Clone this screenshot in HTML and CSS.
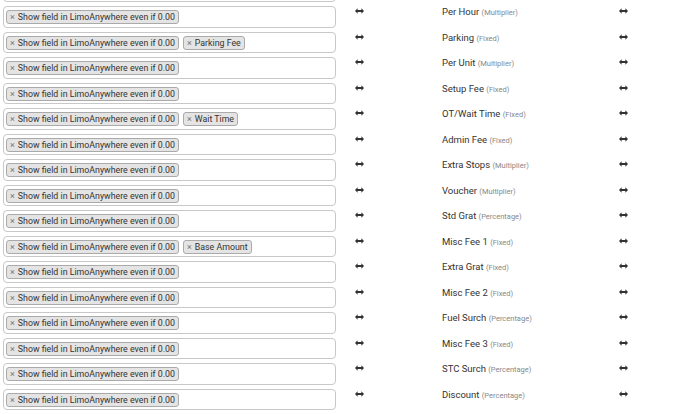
FILE: index.html
```html
<!DOCTYPE html>
<html lang="en">
<head>
  <meta charset="UTF-8">
  <meta name="viewport" content="width=device-width, initial-scale=1.0">
  <title>Field Mapping</title>
  <link rel="stylesheet" href="styles.css">
</head>
<body>
  <div class="mapping">
    <!-- previous row, scrolled mostly out of view -->
    <div class="row">
      <div class="select"></div>
    </div>
    <div id="mapping"></div>
  </div>

  <script>
    const rows = [
      ['Per Hour', 'Multiplier', []],
      ['Parking', 'Fixed', ['Parking Fee']],
      ['Per Unit', 'Multiplier', []],
      ['Setup Fee', 'Fixed', []],
      ['OT/Wait Time', 'Fixed', ['Wait Time']],
      ['Admin Fee', 'Fixed', []],
      ['Extra Stops', 'Multiplier', []],
      ['Voucher', 'Multiplier', []],
      ['Std Grat', 'Percentage', []],
      ['Misc Fee 1', 'Fixed', ['Base Amount']],
      ['Extra Grat', 'Fixed', []],
      ['Misc Fee 2', 'Fixed', []],
      ['Fuel Surch', 'Percentage', []],
      ['Misc Fee 3', 'Fixed', []],
      ['STC Surch', 'Percentage', []],
      ['Discount', 'Percentage', []]
    ];

    const arrow = `<svg class="arrow-icon" width="9" height="6" viewBox="0 0 9 6">
      <path d="M0 3 L2.6 0.2 V2 H6.4 V0.2 L9 3 L6.4 5.8 V4 H2.6 V5.8 Z" fill="#333"/>
    </svg>`;

    const tag = text => `<span class="tag"><span class="tag-remove">×</span>${text}</span>`;

    document.getElementById('mapping').innerHTML = rows.map(([name, type, extra]) => `
      <div class="row">
        <div class="select">
          ${tag('Show field in LimoAnywhere even if 0.00')}
          ${extra.map(tag).join('')}
        </div>
        <div class="arrow">${arrow}</div>
        <div class="label">${name} <small>(${type})</small></div>
        <div class="arrow end">${arrow}</div>
      </div>
    `).join('');
  </script>
</body>
</html>
```

FILE: styles.css
```css
body {
  margin: 0;
  font-family: Roboto, "Liberation Sans", sans-serif;
  background-color: #fff;
  color: #333;
  overflow: hidden;
}
.mapping {
  margin-top: -19.5px;
  padding-left: 3px;
}
.row {
  display: grid;
  grid-template-columns: 333px 106px 176px 40px;
  align-items: start;
  height: 25.5px;
}
.select {
  box-sizing: border-box;
  height: 21.5px;
  border: 1px solid #c8c8c8;
  border-radius: 4px;
  padding: 3px 2px 0;
  display: flex;
  align-items: flex-start;
  gap: 4px;
}
.tag {
  display: inline-block;
  font-size: 8.8px;
  line-height: 12px;
  padding: 0 3px;
  background-color: #e4e4e4;
  border: 1px solid #aaa;
  border-radius: 3px;
  color: #333;
  white-space: nowrap;
}
.tag-remove {
  color: #777;
  font-size: 9px;
  margin-right: 3px;
}
.arrow {
  padding-left: 19px;
  height: 12px;
}
.arrow.end {
  padding-left: 1px;
}
.arrow-icon {
  display: block;
  margin-top: 2px;
}
.label {
  font-size: 9.5px;
  line-height: 12px;
  color: #333;
  white-space: nowrap;
}
.label small {
  font-size: 7.5px;
  color: #888;
}
```
